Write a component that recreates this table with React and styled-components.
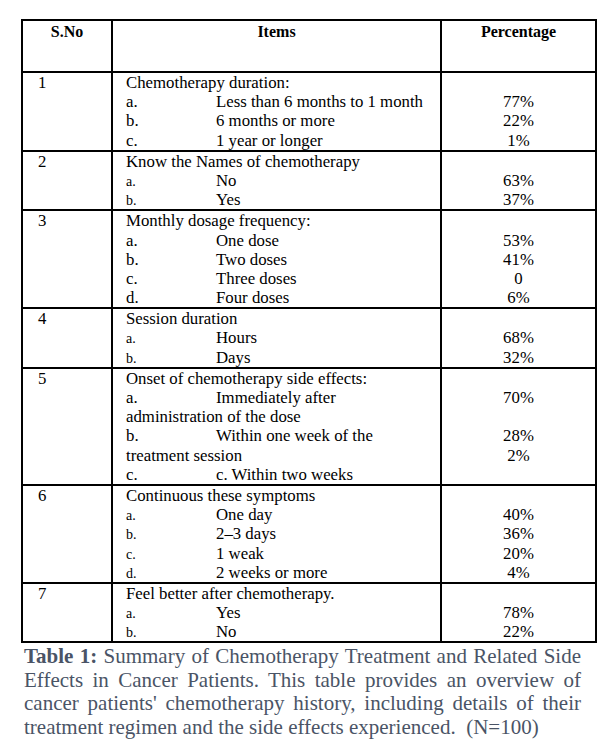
import React from "react";
import styled, { createGlobalStyle } from "styled-components";

const Global = createGlobalStyle`
  html, body { margin: 0; padding: 0; background: #ffffff; }
  body { font-family: "Liberation Serif", "Times New Roman", serif; color: #000; }
`;

const Page = styled.div`
  width: 616px;
  height: 748px;
  box-sizing: border-box;
  padding: 19px 0 0 21px;
  background: #fff;
`;

const Table = styled.table`
  width: 574px;
  border-collapse: collapse;
  table-layout: fixed;
  font-family: "Liberation Serif", serif;
  font-size: 16.8px;
  line-height: 19.2px;
`;

const Head = styled.th`
  border: 2px solid #000;
  height: 49px;
  vertical-align: top;
  text-align: center;
  font-weight: bold;
  font-size: 16px;
  line-height: 19.6px;
  padding: 1px 0 0;
`;

const Cell = styled.td`
  border: 2px solid #000;
  vertical-align: top;
  padding: 0 0 0 ${(p) => p.$pl || 0}px;
`;

const Line = styled.div`
  height: 19.2px;
  white-space: nowrap;
  display: flex;
  align-items: baseline;
`;

const PctLine = styled.div`
  height: 19.2px;
  text-align: center;
`;

const Label = styled.span`
  width: 90px;
  flex: none;
  font-size: ${(p) => (p.$small ? "14px" : "16.8px")};
`;

const Caption = styled.div`
  margin: 2px 0 0;
  width: 557px;
  padding-left: 3px;
  font-family: "Liberation Serif", serif;
  font-size: 21px;
  line-height: 23.4px;
  color: #4a5466;
`;

const CaptionLine = styled.div`
  white-space: nowrap;
  text-align: justify;
  text-align-last: ${(p) => (p.$last ? "left" : "justify")};
  white-space: ${(p) => (p.$last ? "pre" : "normal")};
`;

const rows = [
  {
    n: 1,
    small: false,
    lines: [
      { text: "Chemotherapy duration:" },
      { label: "a.", text: "Less than 6 months to 1 month", pct: "77%" },
      { label: "b.", text: "6 months or more", pct: "22%" },
      { label: "c.", text: "1 year or longer", pct: "1%" },
    ],
  },
  {
    n: 2,
    small: true,
    lines: [
      { text: "Know the Names of chemotherapy" },
      { label: "a.", text: "No", pct: "63%" },
      { label: "b.", text: "Yes", pct: "37%" },
    ],
  },
  {
    n: 3,
    small: false,
    lines: [
      { text: "Monthly dosage frequency:" },
      { label: "a.", text: "One dose", pct: "53%" },
      { label: "b.", text: "Two doses", pct: "41%" },
      { label: "c.", text: "Three doses", pct: "0" },
      { label: "d.", text: "Four doses", pct: "6%" },
    ],
  },
  {
    n: 4,
    small: true,
    lines: [
      { text: "Session duration" },
      { label: "a.", text: "Hours", pct: "68%" },
      { label: "b.", text: "Days", pct: "32%" },
    ],
  },
  {
    n: 5,
    small: false,
    lines: [
      { text: "Onset of chemotherapy side effects:" },
      { label: "a.", text: "Immediately after", pct: "70%" },
      { text: "administration of the dose" },
      { label: "b.", text: "Within one week of the", pct: "28%" },
      { text: "treatment session", pct: "2%" },
      { label: "c.", text: "c. Within two weeks" },
    ],
  },
  {
    n: 6,
    small: true,
    lines: [
      { text: "Continuous these symptoms" },
      { label: "a.", text: "One day", pct: "40%" },
      { label: "b.", text: "2\u20133 days", pct: "36%" },
      { label: "c.", text: "1 weak", pct: "20%" },
      { label: "d.", text: "2 weeks or more", pct: "4%" },
    ],
  },
  {
    n: 7,
    small: true,
    lines: [
      { text: "Feel better after chemotherapy." },
      { label: "a.", text: "Yes", pct: "78%" },
      { label: "b.", text: "No", pct: "22%" },
    ],
  },
];

export default function App() {
  return (
    <Page>
      <Global />
      <Table>
        <colgroup>
          <col style={{ width: 90 }} />
          <col style={{ width: 329 }} />
          <col style={{ width: 155 }} />
        </colgroup>
        <thead>
          <tr>
            <Head>S.No</Head>
            <Head>Items</Head>
            <Head>Percentage</Head>
          </tr>
        </thead>
        <tbody>
          {rows.map((r) => (
            <tr key={r.n}>
              <Cell $pl={15}>
                <Line>{r.n}</Line>
              </Cell>
              <Cell $pl={13}>
                {r.lines.map((l, i) => (
                  <Line key={i}>
                    {l.label && <Label $small={r.small}>{l.label}</Label>}
                    <span>{l.text}</span>
                  </Line>
                ))}
              </Cell>
              <Cell>
                {r.lines.map((l, i) => (
                  <PctLine key={i}>{l.pct || "\u00a0"}</PctLine>
                ))}
              </Cell>
            </tr>
          ))}
        </tbody>
      </Table>
      <Caption>
        <CaptionLine>
          <b>Table 1:</b> Summary of Chemotherapy Treatment and Related Side
        </CaptionLine>
        <CaptionLine>
          Effects in Cancer Patients. This table provides an overview of
        </CaptionLine>
        <CaptionLine>
          cancer patients' chemotherapy history, including details of their
        </CaptionLine>
        <CaptionLine $last>
          {"treatment regimen and the side effects experienced.  (N=100)"}
        </CaptionLine>
      </Caption>
    </Page>
  );
}
